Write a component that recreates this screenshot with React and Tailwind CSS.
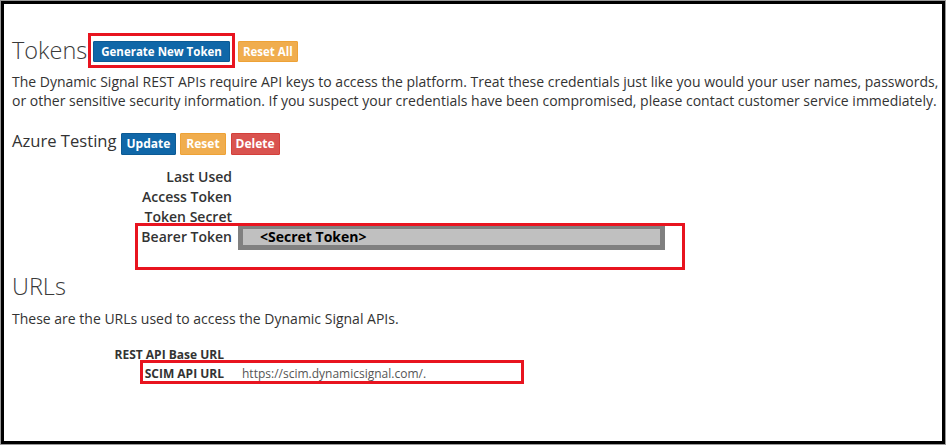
export default function App() {
  const btn = "inline-flex items-center justify-center text-white font-bold border rounded-[1px]";
  return (
    <div className="w-[946px] h-[445px] bg-white border border-[#9a9a9a] font-['Open_Sans',sans-serif] text-[#333]">
      <div className="relative h-full border-[3px] border-black pl-[8px] pt-[28px]">
        {/* Tokens row */}
        <div className="flex items-start h-[35px]">
          <h1 className="text-[23.5px] leading-[36px] font-light text-[#3a3a3a]">Tokens</h1>
          <div className="ml-[1px] mt-[1px] border-[3px] border-[#e8141f] px-[2px] pt-[5px] pb-[3px] flex">
            <button className={`${btn} h-[21px] px-[7px] bg-[#1067a8] border-[#0c5a94] text-[11.5px] leading-[19px]`}>
              Generate New Token
            </button>
          </div>
          <button className={`${btn} ml-[3px] mt-[9px] h-[21px] px-[4px] bg-[#f0ad4e] border-[#eea236] text-[11.5px] leading-[19px]`}>
            Reset All
          </button>
        </div>

        <p className="mt-[5px] text-[14px] leading-[19px] text-[#333]">
          The Dynamic Signal REST APIs require API keys to access the platform. Treat these credentials just like you would your user names, passwords,
          <br />
          or other sensitive security information. If you suspect your credentials have been compromised, please contact customer service immediately.
        </p>

        {/* Azure Testing row */}
        <div className="mt-[23px] flex items-start h-[22px]">
          <h2 className="text-[16.6px] leading-[16px] font-normal text-[#333]">Azure Testing</h2>
          <button className={`${btn} ml-[4px] h-[22px] px-[5px] bg-[#1067a8] border-[#0c5a94] text-[12px] leading-[20px]`}>
            Update
          </button>
          <button className={`${btn} ml-[4px] h-[22px] px-[5px] bg-[#f0ad4e] border-[#eea236] text-[12px] leading-[20px]`}>
            Reset
          </button>
          <button className={`${btn} ml-[5px] h-[22px] px-[4px] bg-[#d9534f] border-[#d43f3a] text-[12px] leading-[20px]`}>
            Delete
          </button>
        </div>

        {/* Token details */}
        <div className="mt-[12px] grid grid-cols-[220px_auto] gap-x-[6px] items-start text-[14px] leading-[20px]">
          <div className="text-right font-semibold">Last Used</div>
          <div></div>
          <div className="text-right font-semibold">Access Token</div>
          <div></div>
          <div className="text-right font-semibold">Token Secret</div>
          <div></div>
          <div className="text-right font-semibold">Bearer Token</div>
          <div className="-mt-[3px] w-[427px] h-[26px] border-[5px] border-[#808080] bg-[#c0c0c0] pl-[17px] flex items-center font-bold text-black leading-[16px]">
            &lt;Secret Token&gt;
          </div>
        </div>

        <h1 className="mt-[18px] text-[23.5px] leading-[36px] font-light text-[#3a3a3a]">URLs</h1>
        <p className="mt-[5px] text-[14px] leading-[19px] text-[#333]">
          These are the URLs used to access the Dynamic Signal APIs.
        </p>

        <div className="mt-[17px] grid grid-cols-[212px_auto] gap-x-[18px] text-[12px] leading-[19px]">
          <div className="text-right font-bold text-[#333]">REST API Base URL</div>
          <div></div>
          <div className="text-right font-bold text-[#333]">SCIM API URL</div>
          <div className="text-[#555]">https://scim.dynamicsignal.com/.</div>
        </div>

        {/* annotation boxes */}
        <div className="absolute left-[131px] top-[219px] w-[550px] h-[47px] border-[3px] border-[#e8141f] pointer-events-none"></div>
        <div className="absolute left-[136px] top-[356px] w-[384px] h-[24px] border-[3px] border-[#e8141f] pointer-events-none"></div>
      </div>
    </div>
  );
}
